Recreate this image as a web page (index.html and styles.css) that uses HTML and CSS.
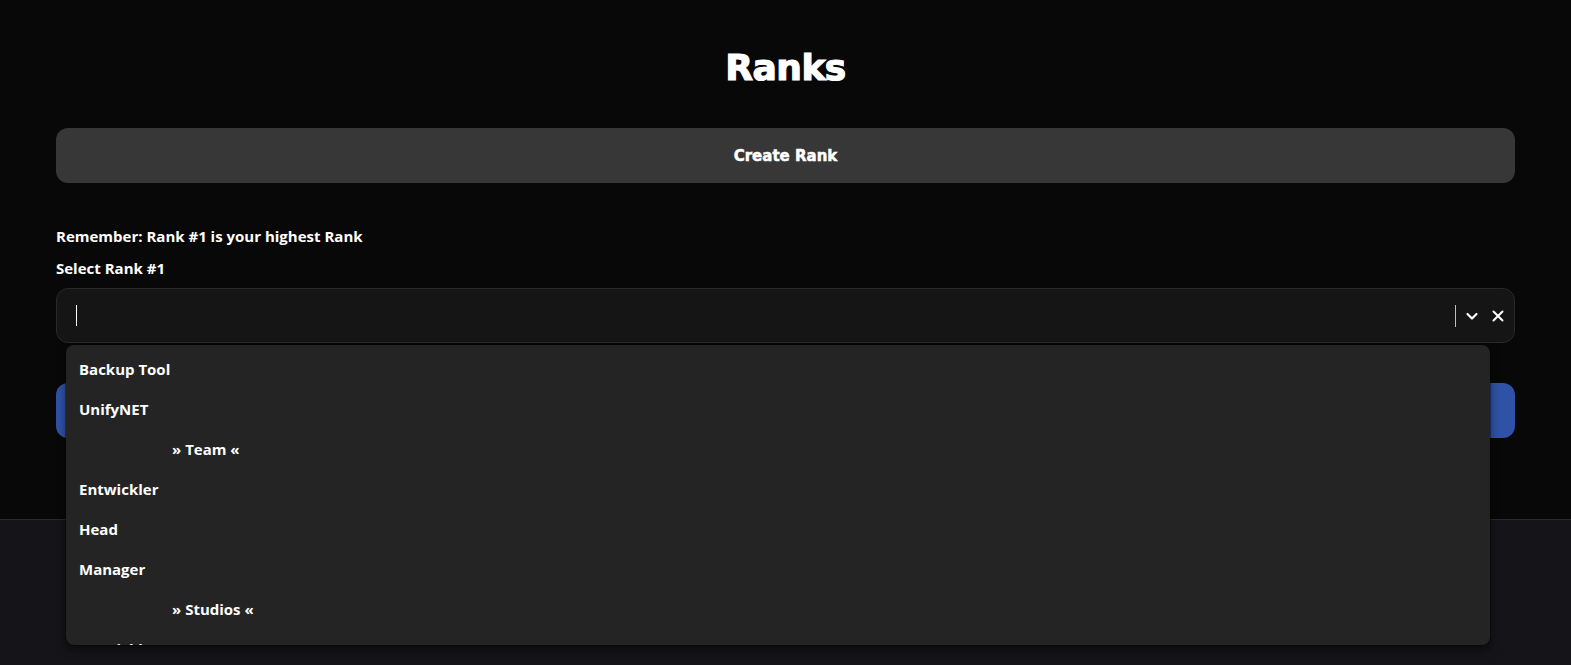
FILE: index.html
```html
<!DOCTYPE html>
<html lang="en">
<head>
  <meta charset="UTF-8" />
  <meta name="viewport" content="width=device-width, initial-scale=1" />
  <title>Ranks</title>
  <link rel="stylesheet" href="styles.css">
</head>
<body>
  <div id="page">
    <main id="ranks">
      <h1 class="page-title">Ranks</h1>
      <button class="btn btn-create">Create Rank</button>
      <p class="hint">Remember: Rank #1 is your highest Rank</p>
      <label class="field-label">Select Rank #1</label>
      <div class="select">
        <div class="select-control">
          <span class="caret"></span>
          <div class="select-indicators">
            <span class="separator"></span>
            <svg class="icon icon-chevron" width="14" height="14" viewBox="0 0 14 14">
              <path d="M2.5 5 L7 9.5 L11.5 5" fill="none" stroke="#ffffff" stroke-width="2.2" stroke-linecap="round" stroke-linejoin="round"/>
            </svg>
            <svg class="icon" width="14" height="14" viewBox="0 0 14 14">
              <path d="M2.5 2.5 L11.5 11.5 M11.5 2.5 L2.5 11.5" fill="none" stroke="#ffffff" stroke-width="2" stroke-linecap="round"/>
            </svg>
          </div>
        </div>
        <div class="select-menu">
          <div class="option">Backup Tool</div>
          <div class="option">UnifyNET</div>
          <div class="option group">» Team «</div>
          <div class="option">Entwickler</div>
          <div class="option">Head</div>
          <div class="option">Manager</div>
          <div class="option group">» Studios «</div>
          <div class="option">Entwickler</div>
        </div>
      </div>
      <button class="btn btn-save">Save</button>
    </main>
    <footer id="footer"></footer>
  </div>
</body>
</html>
```

FILE: styles.css
```css
body, html {
  margin: 0;
  padding: 0;
  height: 100%;
  overflow: hidden;
  background: #141419;
  font-family: 'Open Sans', Lato, 'Liberation Sans', sans-serif;
  color: #ffffff;
}
#page {
  display: flex;
  flex-direction: column;
  min-height: 100vh;
}
#ranks {
  display: flex;
  flex-direction: column;
  background: #080808;
  padding: 46px 56px 81px;
}
.page-title {
  margin: 0;
  font-family: 'DejaVu Sans', sans-serif;
  font-weight: 700;
  font-size: 36px;
  line-height: 44px;
  text-align: center;
  letter-spacing: -0.5px;
  -webkit-text-stroke: 1.2px #ffffff;
}
.btn {
  height: 55px;
  border: none;
  border-radius: 12px;
  color: #ffffff;
  font-family: 'DejaVu Sans', sans-serif;
  font-weight: 700;
  font-size: 15px;
  -webkit-text-stroke: 0.5px #ffffff;
  cursor: pointer;
}
.btn-create {
  margin-top: 38px;
  background: #373737;
}
.btn-save {
  margin-top: 40px;
  background: #2f52a7;
}
.hint {
  margin: 43px 0 12px;
  font-size: 15px;
  font-weight: 700;
  line-height: 20px;
}
.field-label {
  font-size: 15px;
  font-weight: 700;
  line-height: 20px;
  margin-bottom: 10px;
}
.select {
  position: relative;
}
.select-control {
  display: flex;
  align-items: center;
  height: 55px;
  box-sizing: border-box;
  padding: 0 9px 0 19px;
  background: #151515;
  border: 1px solid #292929;
  border-radius: 12px;
}
.caret {
  width: 1px;
  height: 21px;
  background: #ffffff;
}
.select-indicators {
  margin-left: auto;
  display: flex;
  align-items: center;
  gap: 12px;
}
.separator {
  width: 1px;
  height: 22px;
  margin-right: -3px;
  background: #bdbdbd;
}
.icon {
  display: block;
}
.select-menu {
  position: absolute;
  top: calc(100% + 2px);
  left: 10px;
  right: 25px;
  height: 300px;
  overflow: hidden;
  box-sizing: border-box;
  padding-top: 4px;
  background: #242424;
  border-radius: 8px;
  box-shadow: 0 0 0 1px rgba(0, 0, 0, 0.3), 0 4px 10px rgba(0, 0, 0, 0.5);
  z-index: 5;
}
.option {
  height: 40px;
  line-height: 40px;
  padding-left: 13px;
  font-size: 15px;
  font-weight: 700;
}
.option.group {
  padding-left: 106px;
}
#footer {
  flex: 1;
  border-top: 1px solid #2a2a2e;
  background: #141419;
}
```
